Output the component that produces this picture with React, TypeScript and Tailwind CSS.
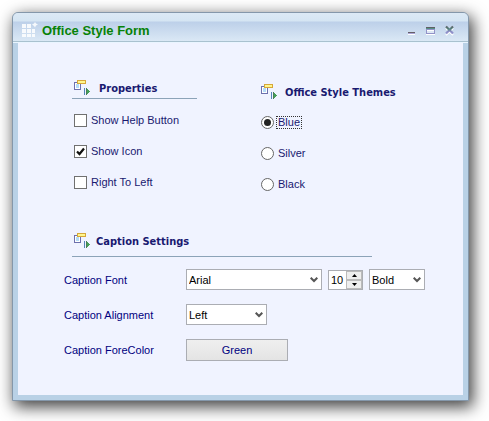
import { useState, type ReactNode } from "react";

function SectionIcon() {
  return (
    <svg width="18" height="16" viewBox="0 0 18 16" shapeRendering="crispEdges" aria-hidden="true" className="shrink-0">
      <rect x="1.5" y="2.5" width="6" height="7" fill="#fff" stroke="#6d70ad" />
      <rect x="3" y="4" width="3" height="4" fill="#b5dcf7" />
      <rect x="4.500" y="0.500" width="8" height="3" fill="#fff68e" stroke="#d6a73a" />
      <path d="M11.500 8v7" stroke="#5583b8" />
      <path d="M13 8l4 3.500-4 3.500z" fill="#45a058" />
      <path d="M13.500 8v7" stroke="#4b7c58" />
    </svg>
  );
}

function Heading({ children, gap = "gap-2" }: { children: ReactNode; gap?: string }) {
  return (
    <h2 className={"flex h-[18px] items-center whitespace-nowrap font-['DejaVu_Sans_Condensed','DejaVu_Sans',sans-serif] text-[11px] font-bold leading-4 text-[#191970] " + gap}>
      <SectionIcon />
      <span className="pt-px">{children}</span>
    </h2>
  );
}

function Check({ label, initial = false }: { label: string; initial?: boolean }) {
  const [on, setOn] = useState(initial);
  return (
    <label className="flex h-4 items-center gap-1">
      <span className="relative flex h-[13px] w-[13px]">
        <input
          type="checkbox"
          checked={on}
          onChange={(e) => setOn(e.target.checked)}
          className="h-[13px] w-[13px] appearance-none border border-[#707070] bg-white"
        />
        {on && (
          <svg width="13" height="13" viewBox="0 0 13 13" className="pointer-events-none absolute inset-0" aria-hidden="true">
            <path d="M3 6.5l2.500 2.500L10 3.500" fill="none" stroke="#111" strokeWidth="2.2" />
          </svg>
        )}
      </span>
      <span>{label}</span>
    </label>
  );
}

function ThemeRadio({ label, value, onPick }: { label: string; value: string; onPick: (v: string) => void }) {
  const on = value === label;
  return (
    <label className="flex h-4 items-center gap-[2px]">
      <span className="relative flex h-[13px] w-[13px]">
        <input
          type="radio"
          name="theme"
          checked={on}
          onChange={() => onPick(label)}
          className="h-[13px] w-[13px] appearance-none rounded-full border border-[#666] bg-white"
        />
        {on && <span className="pointer-events-none absolute inset-[3px] rounded-full bg-[#222]" />}
      </span>
      <span className={"border border-dotted px-px leading-[11px] " + (on ? "border-[#333]" : "border-transparent")}>{label}</span>
    </label>
  );
}

function Select({ id, label, options, width }: { id: string; label: string; options: string[]; width: string }) {
  return (
    <span className={"relative block " + width}>
      <select
        id={id}
        aria-label={label}
        className="h-[21px] w-full appearance-none border border-[#abadb3] bg-white pl-[2px] leading-4 text-black"
      >
        {options.map((o) => (
          <option key={o}>{o}</option>
        ))}
      </select>
      <svg width="8" height="6" viewBox="0 0 8 6" className="pointer-events-none absolute right-1 top-2" aria-hidden="true">
        <path d="M0.7 0.7L4 4l3.3-3.3" fill="none" stroke="#555" strokeWidth="2" />
      </svg>
    </span>
  );
}

function TitleButtons() {
  return (
    <div className="flex items-center gap-2 pt-[2px]">
      <button type="button" aria-label="Minimize" className="h-[11px] w-[11px]">
        <svg width="11" height="11" viewBox="0 0 11 11" shapeRendering="crispEdges">
          <path d="M2 7.5h7" stroke="#665f68" />
          <path d="M2 8.5h7" stroke="#a9a4d4" />
          <path d="M2 9.5h7" stroke="#fff" />
        </svg>
      </button>
      <button type="button" aria-label="Maximize" className="h-[11px] w-[11px]">
        <svg width="11" height="11" viewBox="0 0 11 11" shapeRendering="crispEdges">
          <rect x="1" y="2" width="9" height="7" fill="#9292c8" />
          <path d="M1 2.5h9" stroke="#5f6064" />
          <path d="M1 3.5h9" stroke="#569085" />
          <rect x="2" y="5" width="7" height="3" fill="#dde7f4" />
          <path d="M2 5.5h7M1 9.5h9" stroke="#fff" />
        </svg>
      </button>
      <button type="button" aria-label="Close" className="h-[11px] w-[11px]">
        <svg width="11" height="11" viewBox="0 0 11 11">
          <defs>
            <linearGradient id="x" x1="0" y1="0" x2="0" y2="11" gradientUnits="userSpaceOnUse">
              <stop offset="0.1" stopColor="#5f5f65" />
              <stop offset="0.35" stopColor="#55857e" />
              <stop offset="0.6" stopColor="#8d8dc8" />
              <stop offset="1" stopColor="#9d9dd2" />
            </linearGradient>
          </defs>
          <path d="M2 3l7 7M9 3l-7 7" stroke="#fff" strokeWidth="2" />
          <path d="M2 1.5l7 7M9 1.5l-7 7" stroke="url(#x)" strokeWidth="2.2" />
        </svg>
      </button>
    </div>
  );
}

export default function App() {
  const [theme, setTheme] = useState("Blue");
  const [size, setSize] = useState(10);

  return (
    <div className="overflow-hidden bg-white pt-3 pr-5 pb-5 pl-3 font-['Liberation_Sans',Arial,sans-serif] text-[11px] leading-4 text-[#191970]">
      <main className="rounded-t-md border border-[#8497aa] bg-[#b9d1e6] shadow-[3px_5px_16px_1px_rgba(0,0,0,0.75)]">
        <header className="flex h-[30px] items-center justify-between rounded-t-[5px] border-b border-[#eaf5ff] bg-[linear-gradient(#dce9f5_0px,#d5e5f3_8px,#bdd0e9_9px,#dae8f5_28px,#a9c1cf_28px,#a9c1cf_29px)] pt-1 pr-[13px] pl-2">
          <div className="flex items-center gap-1">
            <svg width="17" height="16" viewBox="0 0 17 16" aria-hidden="true">
              <path
                d="M1 2h4v4H1zM6 2h4v4H6zM1 7h4v4H1zM6 7h4v4H6zM11 7h3v4h-3zM1 12h4v3H1zM6 12h4v3H6zM11 12h3v3h-3zM14 0l1 1.500 2 1-2 1-1 2-1-1.500-2-1.500 2-1z"
                fill="#fff"
                fillOpacity="0.85"
              />
            </svg>
            <h1 className="pt-[2px] text-[13px] font-bold leading-4 text-[#078207]">Office Style Form</h1>
          </div>
          <TitleButtons />
        </header>

        <form className="mx-[5px] mb-[5px] bg-[#f0f3ff] pt-9 pb-[34px] pl-[46px]" onSubmit={(e) => e.preventDefault()}>
          <div className="flex pl-2">
            <section className="w-[188px]">
              <div className="w-[125px] border-b border-[#8ca3b8] pb-[1px] pl-px">
                <Heading>Properties</Heading>
              </div>
              <div className="mt-[13px] flex flex-col gap-[15px] pl-[2px]">
                <Check label="Show Help Button" />
                <Check label="Show Icon" initial />
                <Check label="Right To Left" />
              </div>
            </section>
            <section className="pt-1">
              <Heading gap="gap-[7px]">Office Style Themes</Heading>
              <div className="mt-[13px] flex flex-col gap-[15px] pl-px">
                {["Blue", "Silver", "Black"].map((t) => (
                  <ThemeRadio key={t} label={t} value={theme} onPick={setTheme} />
                ))}
              </div>
            </section>
          </div>

          <section className="mt-10">
            <div className="ml-2 w-[300px] border-b border-[#8ca3b8] pb-[6px] pl-px">
              <Heading gap="gap-[5px]">Caption Settings</Heading>
            </div>
            <div className="mt-3 grid grid-cols-[122px_1fr] items-center gap-y-[14px] text-[#000080]">
              <label htmlFor="font">Caption Font</label>
              <div className="flex items-center gap-[6px]">
                <Select id="font" label="Caption Font" options={["Arial", "Tahoma", "Verdana"]} width="w-[136px]" />
                <span className="flex h-5 w-[35px] border border-[#abadb3] bg-white">
                  <input
                    type="text"
                    aria-label="Font size"
                    value={size}
                    onChange={(e) => setSize(Number(e.target.value) || 0)}
                    className="w-[17px] pl-[2px] text-black"
                  />
                  <span className="flex w-4 flex-col">
                    <button type="button" aria-label="Increase" onClick={() => setSize(size + 1)} className="flex h-[9px] items-center justify-center border border-[#bbb] bg-[#eee]">
                      <svg width="5" height="3" viewBox="0 0 5 3"><path d="M0 3L2.500 0 5 3z" /></svg>
                    </button>
                    <button type="button" aria-label="Decrease" onClick={() => setSize(size - 1)} className="flex h-[9px] items-center justify-center border border-[#bbb] bg-[#eee]">
                      <svg width="5" height="3" viewBox="0 0 5 3"><path d="M0 0L2.500 3 5 0z" /></svg>
                    </button>
                  </span>
                </span>
                <Select id="weight" label="Font weight" options={["Bold", "Regular"]} width="w-14" />
              </div>
              <label htmlFor="align">Caption Alignment</label>
              <Select id="align" label="Caption Alignment" options={["Left", "Center", "Right"]} width="w-[81px]" />
              <label htmlFor="color">Caption ForeColor</label>
              <button id="color" type="button" className="h-[22px] w-[102px] border border-[#abadb3] bg-linear-to-b from-[#efefef] to-[#e4e4e4]">
                Green
              </button>
            </div>
          </section>
        </form>
      </main>
    </div>
  );
}
